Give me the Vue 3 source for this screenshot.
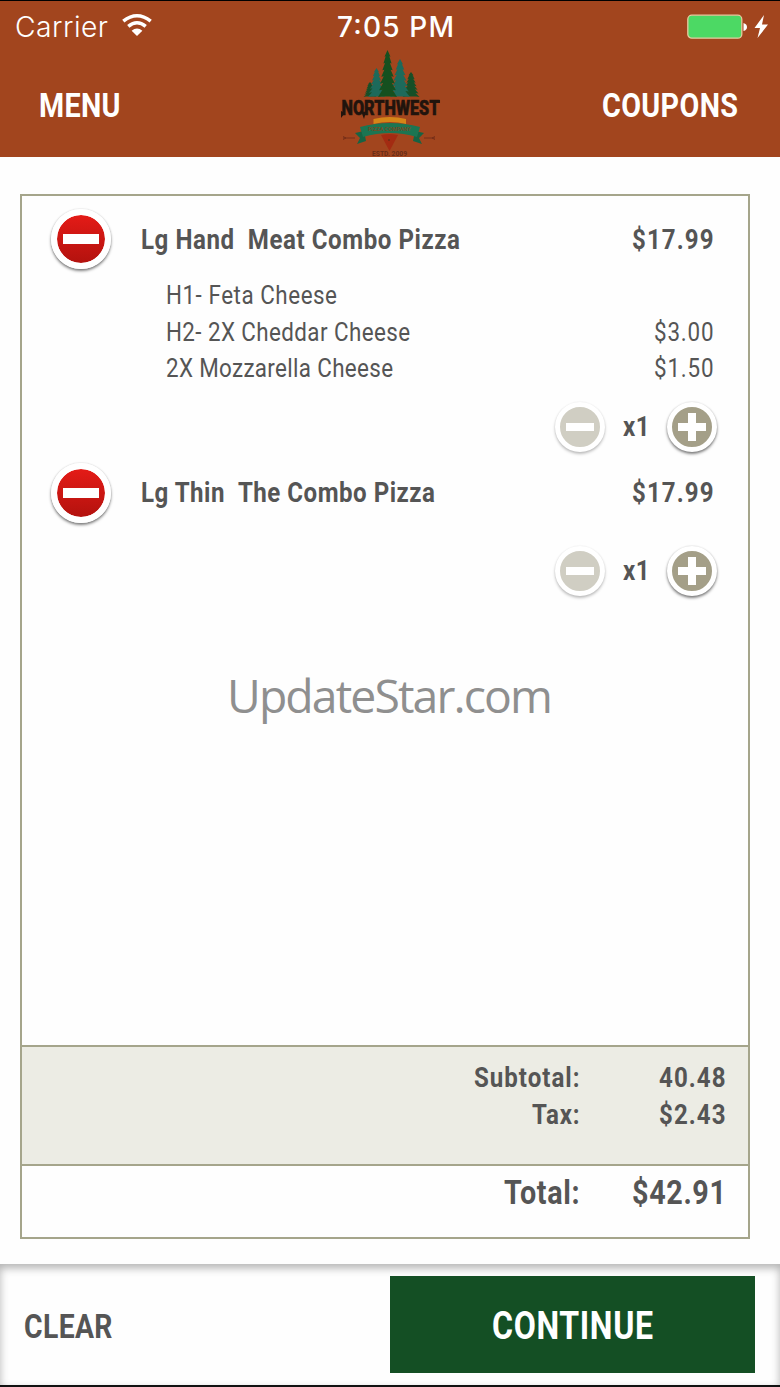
<script setup>
import { h } from 'vue'

// Condensed label: the glyphs are squeezed, then tracked out to the given width.
// The svg box is centred on the capitals, so flex centering lines labels up.
const Label = (props) => {
  const size = Number(props.size)
  const width = Number(props.width)
  const squeeze = Number(props.squeeze || 0.845)
  return h('svg', { class: 'label', width, height: size }, [
    h('text', {
      x: 0,
      y: size * 0.855,
      'font-size': size,
      transform: `scale(${squeeze} 1)`,
      textLength: width / squeeze,
      lengthAdjust: 'spacing'
    }, props.text)
  ])
}
Label.props = ['text', 'size', 'width', 'squeeze']

const items = [
  {
    name: 'Lg Hand \u00a0Meat Combo Pizza',
    nameWidth: 319,
    price: '$17.99',
    qty: 1,
    mods: [
      { name: 'H1- Feta Cheese', width: 171, price: '' },
      { name: 'H2- 2X Cheddar Cheese', width: 244, price: '$3.00' },
      { name: '2X Mozzarella Cheese', width: 227, price: '$1.50' }
    ]
  },
  {
    name: 'Lg Thin \u00a0The Combo Pizza',
    nameWidth: 294,
    price: '$17.99',
    qty: 1,
    mods: []
  }
]

const trees = [
  { x: 370, top: 82, w: 13, fill: '#174f27' },
  { x: 376.5, top: 68, w: 17, fill: '#1d6a5b' },
  { x: 411, top: 72, w: 17, fill: '#174f27' },
  { x: 400, top: 59, w: 20, fill: '#1d6a5b' },
  { x: 387.5, top: 50, w: 19, fill: '#15501f' }
]

// jagged fir outline, bottom at y = 97
function treePath({ x, top, w }) {
  const steps = 7
  const dy = (97 - top) / steps
  const right = []
  for (let i = 1; i <= steps; i++) {
    const half = (w / 2) * (0.2 + (0.8 * i) / steps)
    const y = top + dy * i
    right.push([half, y], [half * 0.6, y - 0.5])
  }
  const points = [
    [x, top],
    ...right.map(([dx, y]) => [x + dx, y]),
    ...right.reverse().map(([dx, y]) => [x - dx, y])
  ]
  return `M${points.map((p) => p.join(' ')).join('L')}Z`
}
</script>

<template>
  <div class="screen">
    <header class="header">
      <div class="status">
        <div class="status__left">
          <Label class="label--carrier" text="Carrier" size="28" width="93" squeeze="1.01" />
          <svg class="wifi" width="32" height="24" viewBox="0 0 32 24">
            <path d="M2.3 8.2Q16 -2.8 29.700 8.2" />
            <path d="M7.300 13.4Q16 6.200 24.700 13.4" />
            <path class="wifi__dot" d="M10.600 17.800Q16 13.400 21.400 17.800L16 23Z" />
          </svg>
        </div>
        <Label class="label--time" text="7:05 PM" size="28" width="117" squeeze="1" />
        <div class="status__right">
          <svg width="82" height="26" viewBox="0 0 82 26">
            <rect x="0.8" y="1.2" width="54" height="23" rx="4" fill="#4cd964" stroke="#e6c9a0" stroke-width="1.3" />
            <path d="M56.500 9Q60 10 60 13T56.500 17Z" fill="#fff" />
            <path d="M77 1L67.500 14H73L70.500 24L81 10.500H75Z" fill="#fff" />
          </svg>
        </div>
      </div>
      <nav class="nav">
        <Label text="MENU" size="34" width="81.5" />
        <Label text="COUPONS" size="34" width="136" />
      </nav>
      <svg class="logo" width="110" height="112" viewBox="335 47 110 112">
        <path v-for="tree in trees" :key="tree.x" :d="treePath(tree)" :fill="tree.fill" />
        <text class="logo__name" x="341.500" y="114.500" font-size="19.500" textLength="98" lengthAdjust="spacingAndGlyphs">NORTHWEST</text>
        <path d="M341 111V118L345 113ZM440 100V103L430 102ZM361 111L364 119L366 112Z" fill="#21140d" />
        <path d="M373.500 119Q390 115 406 119V124Q390 120 373.500 124Z" fill="#d58518" />
        <path d="M355 133L364 131L366 141L357 144L360 138ZM424 133L415 131L413 141L422 144L419 138Z" fill="#176343" />
        <path d="M381 135Q389 133 398 135L389.500 151Z" fill="#a32b12" />
        <path d="M360 127Q390 119 420 127L417 137Q390 129 363 137Z" fill="#1c7552" />
        <text class="logo__ribbon" x="368" y="130.500" font-size="5" textLength="43" lengthAdjust="spacingAndGlyphs">PIZZA COMPANY</text>
        <circle cx="389" cy="140" r="1" fill="#6b2d14" />
        <path d="M343 138H355M424 138H435M343 136.500L346 138L343 139.500M435 136.500L432 138L435 139.500" fill="none" stroke="#762f18" stroke-width="1" />
        <text class="logo__estd" x="372" y="156" font-size="6.500" textLength="35" lengthAdjust="spacingAndGlyphs">ESTD. 2009</text>
      </svg>
    </header>

    <main class="order">
      <section class="items">
        <article v-for="item in items" :key="item.name" class="item">
          <div class="item__head">
            <button class="round round--remove"><span class="bar"></span></button>
            <Label :text="item.name" size="28.5" :width="item.nameWidth" />
            <Label class="push" :text="item.price" size="28.5" width="81.5" />
          </div>
          <ul class="mods">
            <li v-for="mod in item.mods" :key="mod.name" class="mod">
              <Label :text="mod.name" size="26.5" :width="mod.width" />
              <Label v-if="mod.price" :text="mod.price" size="26.5" width="59.5" />
            </li>
          </ul>
          <div class="stepper">
            <button class="round round--minus" disabled><span class="bar"></span></button>
            <Label :text="'x' + item.qty" size="28.5" width="26.5" />
            <button class="round round--plus"><span class="bar"></span><span class="bar bar--v"></span></button>
          </div>
        </article>
        <div class="watermark">
          <Label class="label--watermark" text="UpdateStar.com" size="45" width="326" squeeze="1.03" />
        </div>
      </section>
      <section class="sums">
        <div class="sum">
          <Label text="Subtotal:" size="28.5" width="105.500" />
          <div class="sum__value"><Label text="40.48" size="28.5" width="66.5" /></div>
        </div>
        <div class="sum">
          <Label text="Tax:" size="28.5" width="47.5" />
          <div class="sum__value"><Label text="$2.43" size="28.5" width="66.5" /></div>
        </div>
      </section>
      <section class="total">
        <Label text="Total:" size="34" width="75.5" />
        <div class="sum__value"><Label text="$42.91" size="34" width="94" /></div>
      </section>
    </main>

    <footer class="footer">
      <button class="clear"><Label text="CLEAR" size="33.5" width="88.5" /></button>
      <button class="continue"><Label text="CONTINUE" size="38" width="161" /></button>
    </footer>
  </div>
</template>

<style>
body {
  margin: 0;
  background: #fff;
}
</style>

<style scoped>
.screen {
  display: flex;
  flex-direction: column;
  box-sizing: border-box;
  width: 780px;
  height: 1387px;
  border-top: 1.5px solid #000;
  border-bottom: 2px solid #111;
  background: #fefefe;
  color: #555;
  font-family: Roboto, 'Liberation Sans', sans-serif;
  font-weight: 700;
  overflow: hidden;
}

button {
  margin: 0;
  padding: 0;
  border: 0;
  background: none;
  color: inherit;
  font: inherit;
}

.label {
  display: block;
  flex: none;
  overflow: visible;
  fill: currentColor;
}

/* header */
.header {
  position: relative;
  flex: none;
  height: 156px;
  background: #a2451e;
  color: #fff;
}

.status {
  display: grid;
  grid-template-columns: 1fr auto 1fr;
  align-items: center;
  height: 51px;
  padding: 0 11px 0 15px;
  font-family: Inter, 'Liberation Sans', sans-serif;
}

.status__left {
  display: flex;
  align-items: center;
  gap: 13px;
}

.status__right {
  display: flex;
  justify-content: flex-end;
}

.label--carrier {
  font-weight: 350;
}

.label--time {
  margin-left: 6px;
  font-weight: 500;
}

.wifi {
  margin-top: -3px;
  fill: none;
  stroke: #fff;
  stroke-width: 3.5;
}

.wifi__dot {
  fill: #fff;
  stroke: none;
}

.nav {
  display: flex;
  align-items: center;
  justify-content: space-between;
  height: 105px;
  padding: 0 42.5px 0 38.5px;
}

.logo {
  position: absolute;
  top: 45.5px;
  left: 335px;
  overflow: visible;
}

.logo__name {
  fill: #21140d;
  stroke: #21140d;
  stroke-width: 0.5;
  font-weight: 900;
}

.logo__ribbon {
  fill: #704d27;
}

.logo__estd {
  fill: #682d19;
}

/* order */
.order {
  display: flex;
  flex: 1;
  flex-direction: column;
  margin: 36.5px 30px 25px 20px;
  border: 2px solid #a5a58b;
}

.items {
  position: relative;
  flex: 1;
  padding-top: 10.5px;
}

.item {
  margin-bottom: 6px;
}

.item__head {
  display: flex;
  align-items: center;
  height: 66px;
  padding: 0 34.5px 0 28px;
}

.item__head .round {
  margin-right: 30px;
}

.push {
  margin-left: auto;
}

.mods {
  margin: 0;
  padding: 4px 34.5px 0 143.500px;
  list-style: none;
  font-weight: 400;
}

.mod {
  display: flex;
  align-items: center;
  justify-content: space-between;
  height: 36.5px;
}

.stepper {
  display: flex;
  align-items: center;
  justify-content: flex-end;
  gap: 18px;
  height: 54px;
  margin-top: 14px;
  padding-right: 31px;
}

.round {
  display: grid;
  flex: none;
  place-items: center;
  box-sizing: border-box;
  width: 50px;
  height: 50px;
  border: 5px solid #fff;
  border-radius: 50%;
  background: #a49f88;
  box-shadow: 0 2px 3px rgba(0, 0, 0, 0.5), 0 0 2px rgba(0, 0, 0, 0.15);
}

.round--remove {
  width: 60px;
  height: 60px;
  margin-left: 1px;
  border-width: 6px;
  background: linear-gradient(#e41b17, #b3120e);
  background-clip: padding-box;
}

.round--minus {
  background: #d0cec3;
  box-shadow: 0 2px 3px rgba(0, 0, 0, 0.25), 0 0 2px rgba(0, 0, 0, 0.08);
}

.bar {
  grid-area: 1 / 1;
  width: 28px;
  height: 8px;
  background: #fff;
}

.round--remove .bar {
  width: 36px;
  height: 10px;
}

.bar--v {
  width: 8px;
  height: 28px;
}

.watermark {
  position: absolute;
  top: 479px;
  left: 204.5px;
}

.label--watermark {
  color: #8f8f8f;
  font-family: 'Open Sans', 'Noto Sans', sans-serif;
  font-weight: 400;
}

.sums {
  box-sizing: border-box;
  height: 121px;
  padding: 12px 22.5px 0 0;
  border-top: 2px solid #a5a58b;
  border-bottom: 2px solid #a5a58b;
  background: #ecece4;
}

.sum {
  display: flex;
  align-items: center;
  justify-content: flex-end;
  height: 37px;
}

.sum__value {
  display: flex;
  justify-content: flex-end;
  width: 146px;
}

.total {
  display: flex;
  align-items: center;
  justify-content: flex-end;
  height: 51px;
  padding: 0 22.5px 20px 0;
}

/* footer */
.footer {
  display: flex;
  flex: none;
  align-items: center;
  justify-content: space-between;
  box-sizing: border-box;
  height: 121px;
  padding: 0 25px 0 24px;
  box-shadow: inset 0 4px 8px rgba(0, 0, 0, 0.3);
}

.clear {
  margin-top: 2px;
}

.continue {
  display: flex;
  align-items: center;
  justify-content: center;
  box-sizing: border-box;
  width: 365px;
  height: 97px;
  padding-top: 3px;
  background: #144f24;
  color: #fff;
}
</style>
